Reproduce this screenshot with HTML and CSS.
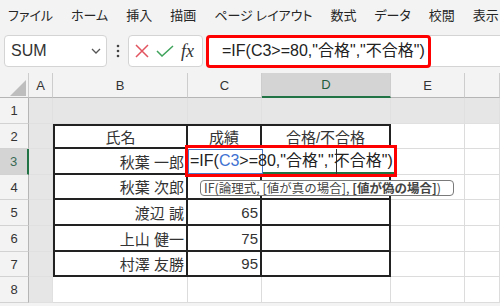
FILE: index.html
```html
<!DOCTYPE html>
<html lang="ja">
<head>
<meta charset="UTF-8" />
<title>IF関数</title>
<link rel="stylesheet" href="styles.css">
</head>
<body>

<div class="menu">
  <span>ファイル</span>
  <span>ホーム</span>
  <span>挿入</span>
  <span>描画</span>
  <span>ページ レイアウト</span>
  <span>数式</span>
  <span>データ</span>
  <span>校閲</span>
  <span>表示</span>
</div>

<div class="fbar">
  <div class="namebox">
    <span>SUM</span>
    <svg class="chev" width="10" height="6" viewBox="0 0 10 6"><polyline points="1,1 5,5 9,1" fill="none" stroke="#555" stroke-width="1.3"/></svg>
  </div>
  <div class="dots">
    <svg width="4" height="14" viewBox="0 0 4 14"><circle cx="2" cy="2" r="1.3" fill="#444"/><circle cx="2" cy="7" r="1.3" fill="#444"/><circle cx="2" cy="12" r="1.3" fill="#444"/></svg>
  </div>
  <div class="btns">
    <svg width="14" height="14" viewBox="0 0 14 14"><path d="M1 1 L13 13 M13 1 L1 13" stroke="#e25560" stroke-width="1.5" fill="none"/></svg>
    <svg width="18" height="12" viewBox="0 0 18 12"><polyline points="1,6 6,11 17,1" fill="none" stroke="#3fa35b" stroke-width="1.5"/></svg>
    <span class="fx">fx</span>
  </div>
  <div class="formula">
    =IF(C3&gt;=80,"合格","不合格")
    <div class="mark"></div>
  </div>
</div>

<div class="sheet">
  <div class="ch corner"><svg width="16" height="16" viewBox="0 0 16 16"><polygon points="16,0 16,16 0,16" fill="#bdbdbd"/></svg></div>
  <div class="ch">A</div>
  <div class="ch">B</div>
  <div class="ch">C</div>
  <div class="ch sel">D</div>
  <div class="ch">E</div>
  <div class="ch"></div>

  <div class="rh">1</div>
  <div class="c fill"></div><div class="c fill"></div><div class="c fill"></div><div class="c fill"></div><div class="c fill"></div><div class="c fill"></div>

  <div class="rh">2</div><div class="c fill"></div><div class="c"></div><div class="c"></div>
  <div class="rh sel">3</div><div class="c fill"></div><div class="c"></div><div class="c"></div>
  <div class="rh">4</div><div class="c fill"></div><div class="c"></div><div class="c"></div>
  <div class="rh">5</div><div class="c fill"></div><div class="c"></div><div class="c"></div>
  <div class="rh">6</div><div class="c fill"></div><div class="c"></div><div class="c"></div>
  <div class="rh">7</div><div class="c fill"></div><div class="c"></div><div class="c"></div>

  <div class="rh">8</div>
  <div class="c fill"></div><div class="c"></div><div class="c"></div><div class="c"></div><div class="c"></div><div class="c"></div>

  <div class="table">
    <div class="t mid">氏名</div><div class="t mid">成績</div><div class="t mid">合格/不合格</div>
    <div class="t">秋葉 一郎</div><div class="t"></div><div class="t"></div>
    <div class="t">秋葉 次郎</div><div class="t"></div><div class="t"></div>
    <div class="t">渡辺 誠</div><div class="t">65</div><div class="t"></div>
    <div class="t">上山 健一</div><div class="t">75</div><div class="t"></div>
    <div class="t">村澤 友勝</div><div class="t">95</div><div class="t"></div>
  </div>
</div>

<div class="edit">
  <div class="ref"></div>
  <div class="active"></div>
  <div class="caret"></div>
  <span class="etext">=IF(<span class="blue">C3</span>&gt;=80,"合格","不合格")</span>
</div>

<div class="tip">IF(論理式, [値が真の場合], <b>[値が偽の場合]</b>)</div>

</body>
</html>
```

FILE: styles.css
```css
body {
  margin: 0;
  width: 500px;
  height: 306px;
  overflow: hidden;
  position: relative;
  background: #f3f3f3;
  color: #333;
  font-family: "Noto Sans CJK JP", sans-serif;
}
.menu {
  height: 28px;
  display: flex;
  align-items: center;
  gap: 18px;
  padding-left: 8px;
  font-size: 13px;
  font-feature-settings: "palt";
  color: #262626;
  white-space: nowrap;
  overflow: hidden;
}
.menu span {
  flex-shrink: 0;
}
.fbar {
  display: flex;
  align-items: center;
  height: 32px;
  padding: 7px 0 6px 4px;
}
.namebox {
  width: 103px;
  height: 32px;
  box-sizing: border-box;
  border: 1px solid #d4d4d4;
  border-radius: 4px;
  background: #fff;
  display: flex;
  align-items: center;
  justify-content: space-between;
  padding: 0 5px 0 6px;
  font-family: "Liberation Sans", sans-serif;
  font-size: 16px;
  color: #333;
}
.dots {
  width: 21px;
  display: flex;
  justify-content: center;
}
.btns {
  width: 75px;
  height: 32px;
  box-sizing: border-box;
  border: 1px solid #d4d4d4;
  border-radius: 4px;
  background: #fff;
  display: flex;
  align-items: center;
  gap: 7px;
  padding-left: 6px;
}
.fx {
  font-family: "Liberation Serif", serif;
  font-style: italic;
  font-size: 18px;
  color: #333;
}
.formula {
  flex: 1;
  height: 32px;
  box-sizing: border-box;
  margin-left: 3px;
  border: 1px solid #d4d4d4;
  border-right: none;
  border-radius: 4px 0 0 4px;
  background: #fff;
  position: relative;
  padding-left: 15px;
  line-height: 30px;
  font-family: "Liberation Sans", "Noto Sans CJK JP", sans-serif;
  font-size: 16px;
  color: #222;
}
.mark {
  position: absolute;
  left: -1px;
  top: -1px;
  width: 225px;
  height: 33px;
  box-sizing: border-box;
  border: 3px solid #f00;
  border-radius: 4px;
}
.sheet {
  display: grid;
  grid-template-columns: 29px 24px 135px 74px 129px 74px 1fr;
  grid-template-rows: 25px 26px 25px 26px 25px 26px 26px 25px 26px;
  font-family: "Liberation Sans", sans-serif;
}
.ch {
  background: #f3f3f3;
  border-right: 1px solid #cdcdcd;
  border-bottom: 1px solid #b5b5b5;
  display: flex;
  align-items: center;
  justify-content: center;
  font-size: 13px;
  color: #333;
}
.ch.corner {
  align-items: flex-end;
  justify-content: flex-end;
  padding: 0 2px 1px 0;
}
.ch.sel {
  background: #d4d4d4;
  border-bottom: 2px solid #217346;
  color: #1e5e3e;
}
.rh {
  background: #f3f3f3;
  border-right: 1px solid #b5b5b5;
  border-bottom: 1px solid #d2d2d2;
  display: flex;
  align-items: center;
  justify-content: center;
  font-size: 13px;
  color: #333;
}
.rh.sel {
  background: #d4d4d4;
  border-right: 2px solid #217346;
  color: #3b6a55;
}
.c {
  background: #fff;
  border-right: 1px solid #dcdcdc;
  border-bottom: 1px solid #dcdcdc;
}
.c.fill {
  background: #e6e6e6;
  border-color: #e0e0e0;
}
.table {
  grid-column: 3 / 6;
  grid-row: 3 / 9;
  display: grid;
  grid-template-columns: 133px 74px 129px;
  grid-template-rows: 23px 26px 25px 26px 26px 25px;
  border-top: 2px solid #222;
  border-left: 2px solid #222;
  background: #fff;
}
.t {
  border-right: 2px solid #222;
  border-bottom: 2px solid #222;
  display: flex;
  align-items: center;
  justify-content: flex-end;
  padding-right: 2px;
  font-family: "Liberation Sans", "Noto Sans CJK JP", sans-serif;
  font-size: 15px;
  color: #333;
}
.t.mid {
  justify-content: center;
  padding-right: 0;
}
.edit {
  position: absolute;
  left: 185px;
  top: 145px;
  width: 212px;
  height: 32px;
  box-sizing: border-box;
  border: 3px solid #f00;
  background: #fff;
  font-family: "Liberation Sans", "Noto Sans CJK JP", sans-serif;
  font-size: 16px;
  color: #222;
}
.ref {
  position: absolute;
  left: 0;
  top: 1px;
  width: 75px;
  height: 25px;
  box-sizing: border-box;
  border: 1px solid #4a78c8;
}
.active {
  position: absolute;
  left: 75px;
  top: 24px;
  width: 131px;
  height: 2px;
  background: #217346;
}
.caret {
  position: absolute;
  left: 148px;
  top: 1px;
  width: 1px;
  height: 25px;
  background: #333;
}
.etext {
  position: relative;
  display: block;
  padding-left: 2px;
  line-height: 26px;
}
.blue {
  color: #3f72d2;
}
.tip {
  position: absolute;
  left: 200px;
  top: 180px;
  width: 254px;
  height: 16px;
  box-sizing: border-box;
  border: 1px solid #7a7a7a;
  border-radius: 4px;
  background: #fff;
  padding-left: 3px;
  font-size: 12.5px;
  line-height: 14px;
  color: #444;
  white-space: nowrap;
}
.tip b {
  font-weight: bold;
}
```
